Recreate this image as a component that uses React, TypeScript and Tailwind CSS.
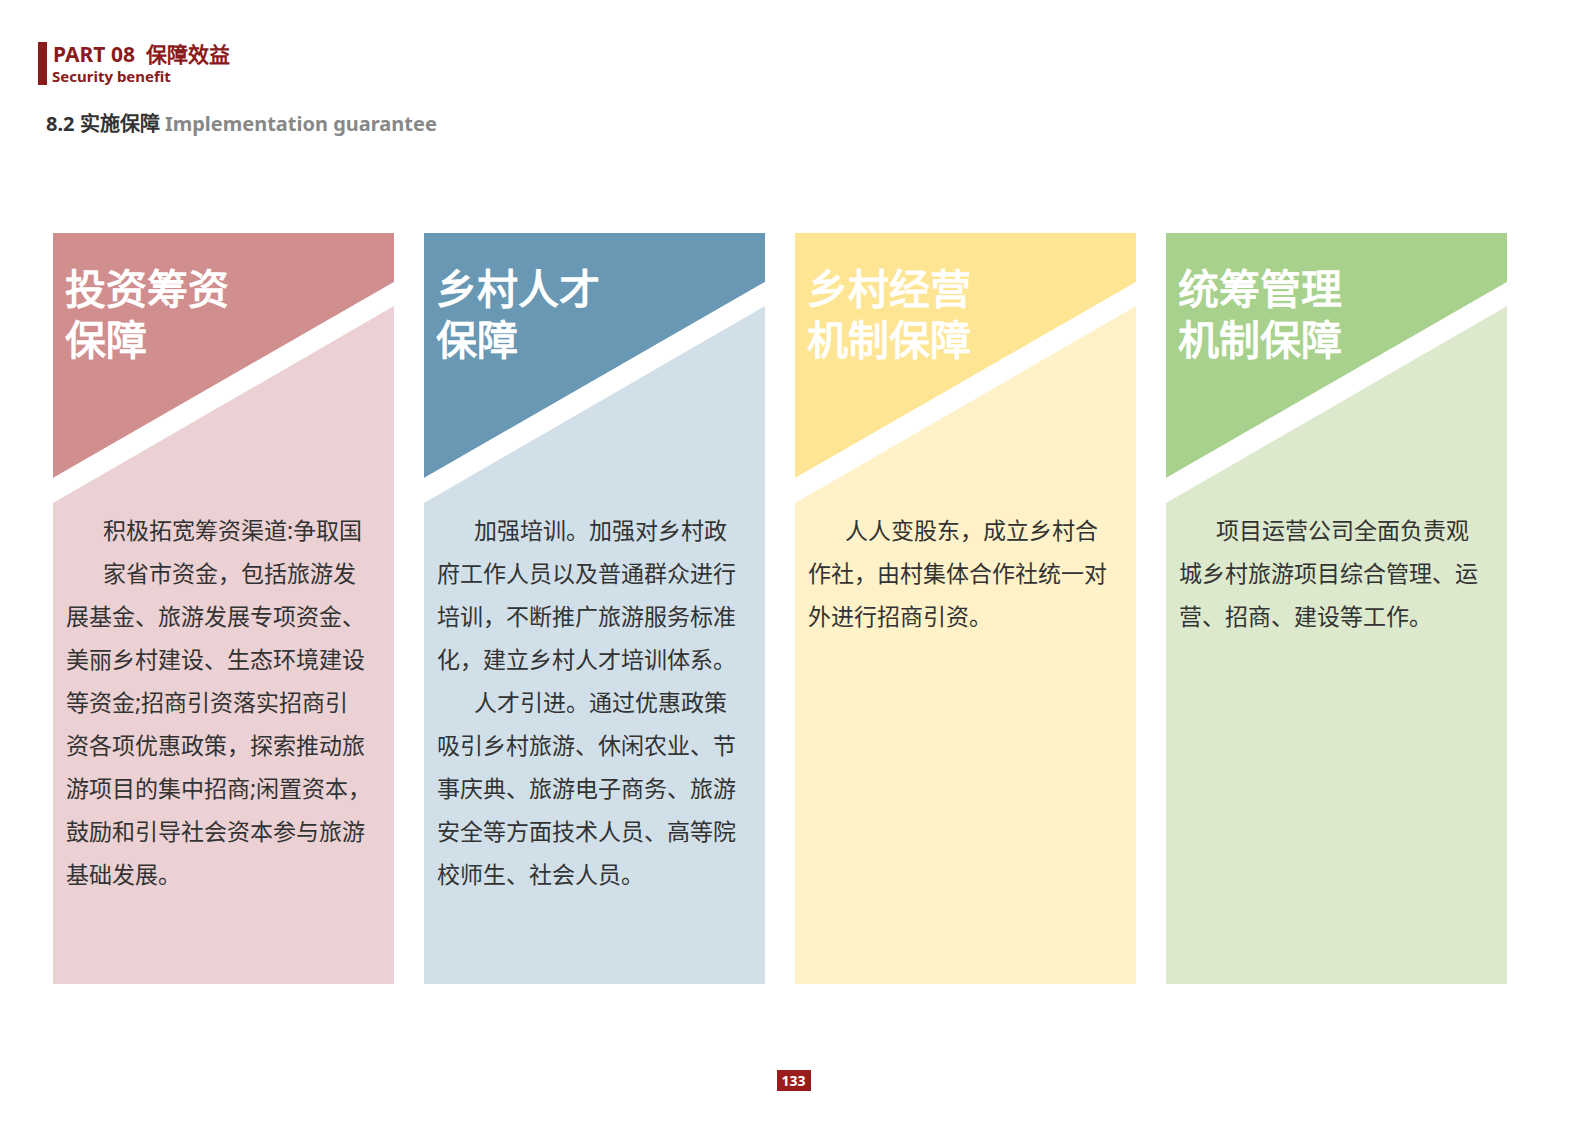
import React from 'react';

type Card = { title: string[]; dark: string; light: string; lines: { t: string; indent?: boolean }[] };

const cards: Card[] = [
  {
    title: ['投资筹资', '保障'],
    dark: '#d08e8f',
    light: '#ebd1d3',
    lines: [
      { t: '积极拓宽筹资渠道:争取国', indent: true },
      { t: '家省市资金，包括旅游发', indent: true },
      { t: '展基金、旅游发展专项资金、' },
      { t: '美丽乡村建设、生态环境建设' },
      { t: '等资金;招商引资落实招商引' },
      { t: '资各项优惠政策，探索推动旅' },
      { t: '游项目的集中招商;闲置资本，' },
      { t: '鼓励和引导社会资本参与旅游' },
      { t: '基础发展。' },
    ],
  },
  {
    title: ['乡村人才', '保障'],
    dark: '#6898b3',
    light: '#d1e0e8',
    lines: [
      { t: '加强培训。加强对乡村政', indent: true },
      { t: '府工作人员以及普通群众进行' },
      { t: '培训，不断推广旅游服务标准' },
      { t: '化，建立乡村人才培训体系。' },
      { t: '人才引进。通过优惠政策', indent: true },
      { t: '吸引乡村旅游、休闲农业、节' },
      { t: '事庆典、旅游电子商务、旅游' },
      { t: '安全等方面技术人员、高等院' },
      { t: '校师生、社会人员。' },
    ],
  },
  {
    title: ['乡村经营', '机制保障'],
    dark: '#fee594',
    light: '#fff2c9',
    lines: [
      { t: '人人变股东，成立乡村合', indent: true },
      { t: '作社，由村集体合作社统一对' },
      { t: '外进行招商引资。' },
    ],
  },
  {
    title: ['统筹管理', '机制保障'],
    dark: '#a8d18d',
    light: '#dde9cc',
    lines: [
      { t: '项目运营公司全面负责观', indent: true },
      { t: '城乡村旅游项目综合管理、运' },
      { t: '营、招商、建设等工作。' },
    ],
  },
];

export default function App() {
  return (
    <div lang="zh-CN" className="w-[1587px] h-[1122px] bg-white relative overflow-hidden">
      <div className="pt-[42px] pl-[38px] flex">
        <div className="w-[9px] h-[43px] bg-[#8b1a1a]" />
        <div className="font-[family-name:'Liberation_Serif','Noto_Sans_CJK_SC',serif] pl-[6px] text-[#8b1a1a] font-bold">
          <div className="text-[21px] leading-[24px]">PART 08&nbsp; 保障效益</div>
          <div className="text-[15px] leading-[20px] -ml-[1px]">Security benefit</div>
        </div>
      </div>
      <div className="font-[family-name:'Liberation_Serif','Noto_Sans_CJK_SC',serif] pl-[46px] pt-[26px] text-[20px] leading-[24px] font-bold">
        <span className="text-[#333]">8.2 实施保障 </span>
        <span className="text-[#888]">Implementation guarantee</span>
      </div>

      <div className="flex pl-[53px] pt-[97px] gap-[30px]">
        {cards.map((c, i) => (
          <div key={i} className="relative w-[341px] h-[751px] shrink-0" style={{ background: c.light }}>
            <svg className="absolute inset-0" width="341" height="751">
              <polygon points="0,0 341,0 341,49 0,245" fill={c.dark} />
              <polygon points="0,245 341,49 341,73 0,270" fill="#fff" />
            </svg>
            <div className="relative font-[family-name:'Noto_Sans_CJK_SC',sans-serif] text-white font-bold text-[41px] leading-[51px] pt-[30px] pl-[12px]">
              {c.title.map((t) => (
                <div key={t}>{t}</div>
              ))}
            </div>
            <div className="relative font-[family-name:'Noto_Sans_CJK_SC',sans-serif] text-[#333] text-[23px] leading-[43px] pt-[144px] pl-[13px]">
              {c.lines.map((l, j) => (
                <div key={j} className={`whitespace-nowrap ${l.indent ? 'pl-[37px]' : ''}`}>
                  {l.t}
                </div>
              ))}
            </div>
          </div>
        ))}
      </div>

      <div className="flex justify-center pt-[86px]">
        <div className="bg-[#9b1c1c] text-white text-[14px] font-bold leading-[21px] w-[34px] text-center font-[family-name:'Liberation_Sans',sans-serif]">
          133
        </div>
      </div>
    </div>
  );
}
